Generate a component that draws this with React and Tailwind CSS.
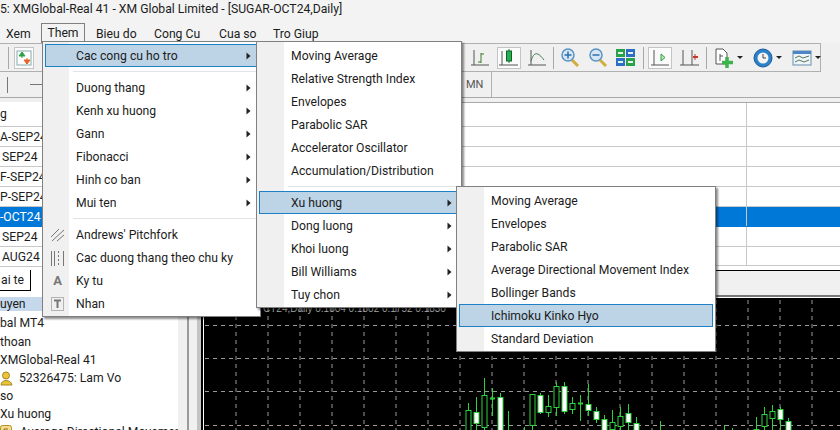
import React from 'react';

const menuOne = [
  { label: 'Cac cong cu ho tro', sub: true, active: true },
  { sep: true },
  { label: 'Duong thang', sub: true },
  { label: 'Kenh xu huong', sub: true },
  { label: 'Gann', sub: true },
  { label: 'Fibonacci', sub: true },
  { label: 'Hinh co ban', sub: true },
  { label: 'Mui ten', sub: true },
  { sep: true },
  { label: "Andrews' Pitchfork", icon: 'fork' },
  { label: 'Cac duong thang theo chu ky', icon: 'cycle' },
  { label: 'Ky tu', icon: 'a' },
  { label: 'Nhan', icon: 't' },
];

const menuTwo = [
  { label: 'Moving Average' },
  { label: 'Relative Strength Index' },
  { label: 'Envelopes' },
  { label: 'Parabolic SAR' },
  { label: 'Accelerator Oscillator' },
  { label: 'Accumulation/Distribution' },
  { sep: true },
  { label: 'Xu huong', sub: true, active: true },
  { label: 'Dong luong', sub: true },
  { label: 'Khoi luong', sub: true },
  { label: 'Bill Williams', sub: true },
  { label: 'Tuy chon', sub: true },
];

const menuThree = [
  { label: 'Moving Average' },
  { label: 'Envelopes' },
  { label: 'Parabolic SAR' },
  { label: 'Average Directional Movement Index' },
  { label: 'Bollinger Bands' },
  { label: 'Ichimoku Kinko Hyo', active: true },
  { label: 'Standard Deviation' },
];

const symbols = [
  { text: 'g' },
  { text: 'A-SEP24' },
  { text: 'SEP24', pad: true },
  { text: 'F-SEP24' },
  { text: 'P-SEP24' },
  { text: '-OCT24', active: true },
  { text: 'SEP24', pad: true },
  { text: 'AUG24', pad: true },
];

// x, wick top, wick bottom, body top, body bottom, filled
const candles = [
  [468, 403, 431, 410, 431, false],
  [476, 397, 431, 412, 423, true],
  [484, 378, 431, 395, 427, false],
  [492, 388, 416, 398, 398, false],
  [500, 393, 431, 397, 431, true],
  [508, 411, 431],
  [524, 427, 431],
  [532, 394, 431, 394, 425, false],
  [540, 393, 414, 395, 412, true],
  [548, 395, 417, 406, 412, false],
  [556, 382, 416, 386, 407, false],
  [564, 382, 414, 386, 411, true],
  [572, 397, 414, 403, 409, false],
  [580, 395, 421, 403, 403, false],
  [588, 384, 416, 404, 410, true],
  [596, 407, 423, 411, 419, true],
  [604, 415, 431, 419, 431, true],
  [612, 410, 431, 422, 429, false],
  [620, 407, 431, 416, 426, false],
  [628, 404, 431, 413, 422, true],
  [636, 417, 431, 423, 431, true],
  [660, 421, 431],
  [724, 425, 431],
  [732, 428, 431],
  [756, 417, 431, 429, 431, false],
  [764, 407, 431, 414, 426, false],
  [772, 405, 431, 411, 418, false],
  [780, 407, 431, 409, 419, true],
  [788, 418, 431, 421, 431, true],
];

function Arrow() {
  return (
    <svg width="5" height="8" viewBox="0 0 5 8" className="shrink-0">
      <path d="M0.5 0.5 L4.5 4 L0.5 7.5 Z" fill="#222" />
    </svg>
  );
}

function GutterIcon({ name }) {
  if (name === 'a') {
    return <span className="text-[13px] font-bold text-[#777]">A</span>;
  }
  return (
    <svg width="15" height="16" viewBox="0 0 15 16" fill="none" stroke="#777">
      {name === 'fork' && <path d="M1 10 L9 2 M2 14 L14 3 M7 14 L14 8" />}
      {name === 'cycle' && <path d="M1.5 1 V16 M4.5 1 V16 M8.5 1 V3 M8.5 5 V7 M8.5 9 V11 M8.5 13 V15 M13.5 1 V16" />}
      {name === 't' && (
        <>
          <rect x="1.5" y="1.5" width="12" height="13" strokeDasharray="1 1" />
          <path d="M4 4.5 H11 M7.5 4.5 V12" strokeWidth="2" />
        </>
      )}
    </svg>
  );
}

function Menu({ items, className, gutter, textPad }) {
  return (
    <div className={`absolute z-10 border border-[#808080] bg-white pt-[2px] pb-[1px] shadow-[2px_2px_2px_rgba(0,0,0,0.45)] ${className}`}>
      <div className={`absolute top-0 bottom-0 left-0 bg-[#f0f0f0] ${gutter}`} />
      {items.map((item, i) =>
        item.sep ? (
          <div key={i} className={`relative flex h-[9px] items-center pr-1 ${textPad}`}>
            <div className="h-px w-full bg-[#e4e4e4]" />
          </div>
        ) : (
          <div
            key={i}
            className={`relative mx-[2px] flex h-[23px] items-center justify-between border pr-[6px] ${textPad} ${
              item.active ? 'border-[#1f7fc4] bg-[#bdd3e6]' : 'border-transparent'
            }`}
          >
            {item.icon && (
              <span className="absolute left-[4px] top-0 flex h-full w-[15px] items-center justify-center">
                <GutterIcon name={item.icon} />
              </span>
            )}
            <span className="whitespace-nowrap pt-[2px]">{item.label}</span>
            {item.sub && <Arrow />}
          </div>
        )
      )}
    </div>
  );
}

function ToolIcon({ name }) {
  return (
    <svg width="22" height="22" viewBox="0 0 22 22" fill="none">
      {name === 'bar' && (
        <>
          <path d="M5 3 V18 M2 18 H20" stroke="#555" />
          <path d="M12 6 V16 M9 15 H12 M12 7 H15" stroke="#3d7a2e" />
        </>
      )}
      {name === 'candle' && (
        <>
          <path d="M4 4 V18 M1 18 H20" stroke="#555" />
          <path d="M11 2 V16" stroke="#1f7a2e" />
          <rect x="8.5" y="4" width="5" height="10" fill="#22b14c" stroke="#14602a" />
        </>
      )}
      {name === 'line' && (
        <>
          <path d="M5 3 V18 M2 18 H20" stroke="#555" />
          <path d="M5 14 C8 4 12 5 18 13" stroke="#3d7a4e" />
        </>
      )}
      {(name === 'zoomin' || name === 'zoomout') && (
        <>
          <path d="M13 13 L19 19" stroke="#d2ad3c" strokeWidth="3" />
          <circle cx="9" cy="8" r="6" fill="#d6e6f5" stroke="#5a93c2" strokeWidth="1.5" />
          <path d={name === 'zoomin' ? 'M5.5 8 H12.5 M9 4.5 V11.5' : 'M5.5 8 H12.5'} stroke="#2f6fa8" strokeWidth="1.5" />
        </>
      )}
      {name === 'grid' && (
        <>
          <rect x="1" y="2" width="9" height="8" fill="#2aa24a" />
          <rect x="11" y="2" width="9" height="8" fill="#2d6fc4" />
          <rect x="1" y="11" width="9" height="8" fill="#2d6fc4" />
          <rect x="11" y="11" width="9" height="8" fill="#2aa24a" />
          <path d="M3 6 H8 M13 6 H18 M3 15 H8 M13 15 H18" stroke="#e8f2ea" strokeWidth="2" />
        </>
      )}
      {name === 'shift' && (
        <>
          <path d="M5 3 V18 M2 18 H20" stroke="#555" />
          <path d="M12 7 L16 10.5 L12 14 Z" fill="#b8e8b8" stroke="#2f9e44" />
        </>
      )}
      {name === 'auto' && (
        <>
          <path d="M4 3 V18 M1 18 H20 M13 3 V18" stroke="#555" />
          <path d="M14 10 H19" stroke="#c0392b" strokeWidth="2" />
          <path d="M16 7 V13" stroke="#c0392b" />
        </>
      )}
      {name === 'new' && (
        <>
          <path d="M3 2 H10 L14 6 V17 H3 Z" fill="#fff" stroke="#555" />
          <path d="M7 7 V14 M7 9 H10" stroke="#555" />
          <path d="M14 10 V21 M9 15.5 H20" stroke="#3cb44b" strokeWidth="3.5" />
        </>
      )}
      {name === 'clock' && (
        <>
          <circle cx="11" cy="11" r="9" fill="#2c7fc9" stroke="#1b5d9a" />
          <circle cx="11" cy="11" r="5.5" fill="#f4f4f4" />
          <path d="M11 7 V11 H14" stroke="#444" />
        </>
      )}
      {name === 'template' && (
        <>
          <rect x="2" y="4" width="18" height="14" fill="#eef4fa" stroke="#6a8cae" />
          <rect x="2" y="4" width="18" height="3" fill="#4d86c4" />
          <path d="M4 11 L8 9 L12 11 L18 9 M4 15 L8 13 L13 15 L18 13" stroke="#557a55" />
        </>
      )}
    </svg>
  );
}

function Tool({ name, active, caret, className = '' }) {
  return (
    <div className={`flex h-[22px] shrink-0 items-center ${className}`}>
      <div className={`flex h-[22px] w-[24px] items-center justify-center border ${active ? 'border-[#c4c4c4] bg-[#fbfbfb]' : 'border-transparent'}`}>
        <ToolIcon name={name} />
      </div>
      {caret && <span className="ml-[1px] h-0 w-0 border-x-[3px] border-t-[3px] border-x-transparent border-t-[#222]" />}
    </div>
  );
}

function Divider({ className = '' }) {
  return <div className={`h-[22px] w-px shrink-0 bg-[#a8a8a8] ${className}`} />;
}

function Chart() {
  const vertical = [];
  for (let x = 236; x < 840; x += 32) vertical.push(x);
  return (
    <svg viewBox="204 298 636 132" className="block h-[132px] w-[636px]">
      {vertical.map(x => (
        <path key={x} d={`M${x} 300 V431`} stroke="#999" strokeDasharray="4 4" />
      ))}
      {[325, 358, 391, 425].map(y => (
        <path key={y} d={`M205 ${y + 0.5} H840`} stroke="#999" strokeDasharray="4 4" />
      ))}
      <text x="263" y="312" fill="#aaa" fontSize="10" fontFamily="'Liberation Sans', sans-serif">CT24,Daily  0.1804 0.1802 0.1752 0.1830</text>
      {candles.map(([x, top, bottom, bodyTop, bodyBottom, filled]) => (
        <g key={x}>
          <path d={`M${x + 0.5} ${top} V${bottom}`} stroke="#2fd13c" />
          {bodyTop !== undefined && bodyTop === bodyBottom && <path d={`M${x - 2} ${bodyTop + 0.5} H${x + 3}`} stroke="#2fd13c" strokeWidth="2" />}
          {bodyTop !== undefined && bodyTop !== bodyBottom && (
            <rect x={x - 2} y={bodyTop + 0.5} width="5" height={bodyBottom - bodyTop} fill={filled ? '#fff' : '#000'} stroke="#2fd13c" />
          )}
        </g>
      ))}
    </svg>
  );
}

function Person() {
  return (
    <svg width="13" height="15" viewBox="0 0 13 15" className="shrink-0">
      <circle cx="6" cy="4.5" r="3.5" fill="#e8c53a" stroke="#a8851c" />
      <path d="M1 14 C1 8 11 8 12 14 Z" fill="#e8c53a" stroke="#a8851c" />
    </svg>
  );
}

function Doc() {
  return (
    <svg width="12" height="14" viewBox="0 0 12 14" className="shrink-0">
      <rect x="0.5" y="0.5" width="11" height="13" rx="2" fill="#f3dc8a" stroke="#b0902a" />
      <path d="M4 4 H8 M4 4 V10 M4 7 H7" stroke="#8a6d14" />
    </svg>
  );
}

export default function App() {
  return (
    <div className="relative h-[430px] w-[840px] overflow-hidden bg-[#f0f0f0] font-['Roboto','Noto_Sans',sans-serif] text-[12.2px] leading-none text-[#1c1c1c]">
      {/* title bar */}
      <div className="flex h-[18px] items-center whitespace-nowrap bg-[#f3f3f3]">5: XMGlobal-Real 41 - XM Global Limited - [SUGAR-OCT24,Daily]</div>

      {/* menu bar */}
      <div className="flex h-[25px] items-end whitespace-nowrap bg-[#f3f3f3] pl-[6px]">
        <div className="flex h-[18px] w-[23px] items-center">Xem</div>
        <div className="ml-[12px] flex h-[20px] w-[44px] items-center justify-center border border-b-0 border-[#808080]">Them</div>
        <div className="ml-[11px] flex h-[18px] w-[40px] items-center">Bieu do</div>
        <div className="ml-[18px] flex h-[18px] w-[47px] items-center">Cong Cu</div>
        <div className="ml-[18px] flex h-[18px] w-[36px] items-center">Cua so</div>
        <div className="ml-[18px] flex h-[18px] items-center">Tro Giup</div>
      </div>

      {/* main toolbar */}
      <div className="flex h-[29px] w-[821px] items-center border-y border-r border-[#b0b0b0]">
        <div className="flex w-[468px] shrink-0 items-center">
          <Divider className="ml-[8px]" />
          <div className="ml-[5px] h-[22px] w-[20px] shrink-0 border border-[#c4c4c4] bg-[#fbfbfb]">
            <svg width="18" height="20" viewBox="0 0 18 20">
              <rect x="2" y="3" width="14" height="14" fill="#fff" stroke="#8aa" />
              <path d="M7 4 L10 8 H4 Z M7 8 V10" fill="#2aa24a" stroke="#2aa24a" />
              <path d="M12 16 L15 12 H9 Z M12 10 V12" fill="#e0672a" stroke="#e0672a" />
            </svg>
          </div>
        </div>
        <Tool name="bar" />
        <Tool name="candle" active className="ml-[5px]" />
        <Tool name="line" className="ml-[4px]" />
        <Divider className="ml-[4px]" />
        <Tool name="zoomin" className="ml-[4px]" />
        <Tool name="zoomout" className="ml-[4px]" />
        <Tool name="grid" className="ml-[4px]" />
        <Divider className="ml-[5px]" />
        <Tool name="shift" active className="ml-[4px]" />
        <Tool name="auto" className="ml-[6px]" />
        <Divider className="ml-[4px]" />
        <Tool name="new" caret className="ml-[5px]" />
        <Tool name="clock" caret className="ml-[8px]" />
        <Tool name="template" caret className="ml-[8px]" />
      </div>

      {/* timeframe toolbar */}
      <div className="flex h-[26px] items-center border-b border-[#a8a8a8]">
        <div className="ml-[7px] h-[16px] w-px bg-[#777]" />
        <div className="ml-[22px] h-px w-[14px] bg-[#777]" />
        <div className="ml-auto flex h-full w-[374px] items-center">
          <span className="text-[11px] text-[#555]">MN</span>
          <div className="ml-[8px] h-full w-px bg-[#b0b0b0]" />
        </div>
      </div>

      <div className="flex h-[332px]">
        {/* left column */}
        <div className="flex w-[203px] shrink-0 flex-col overflow-hidden">
          <div className="mt-[4px] h-[168px] shrink-0 bg-white">
            {symbols.map((s, i) => (
              <div
                key={i}
                className={`flex items-center border-b pt-px ${i === 0 ? 'h-[25px]' : 'h-[20px]'} ${s.pad ? 'pl-[2px]' : ''} ${
                  s.active ? 'border-[#0078d7] bg-[#0078d7] text-white' : 'border-[#c8c8c8]'
                }`}
              >
                {s.text}
              </div>
            ))}
          </div>
          <div className="flex h-[27px] shrink-0 items-start bg-white">
            <div className="flex h-[21px] w-[31px] items-center border-r border-b border-black pl-[1px]">ai te</div>
          </div>
          <div className="flex min-h-0 flex-1 bg-white">
            <div className="min-w-0 flex-1 whitespace-nowrap">
              <div className="flex h-[14px] items-center bg-[#c5d8ec]">uyen</div>
              <div className="flex h-[22px] items-end pb-[4px]">bal MT4</div>
              <div className="flex h-[18px] items-center">thoan</div>
              <div className="flex h-[18px] items-center">XMGlobal-Real 41</div>
              <div className="flex h-[18px] items-center gap-[6px]"><Person />52326475: Lam Vo</div>
              <div className="flex h-[18px] items-center">so</div>
              <div className="flex h-[18px] items-center">Xu huong</div>
              <div className="flex h-[18px] items-center gap-[8px]"><Doc />Average Directional Movemen</div>
            </div>
            <div className="flex w-[19px] shrink-0 justify-center bg-[#f0f0f0] pt-[20px]">
              <div className="h-full w-[2px] bg-[#9a9a9a]" />
            </div>
            <div className="w-[6px] shrink-0 border-r-2 border-black bg-[#c4c4c4]" />
          </div>
        </div>

        {/* right column */}
        <div className="min-w-0 flex-1">
          <div className="mt-[4px] h-[168px] border-t border-[#a8a8a8] bg-white">
            {[24, 20, 20, 20, 20, 20, 20, 19].map((h, i) => (
              <div
                key={i}
                style={{ height: h }}
                className={`flex justify-end border-b ${i === 5 ? 'border-[#0078d7] bg-[#0078d7]' : 'border-[#c8c8c8]'}`}
              >
                <div className="mr-[93px] w-px bg-[#c8c8c8]" />
              </div>
            ))}
          </div>
          <div className="flex h-[28px] flex-col border-t border-black bg-[#f0f0f0]">
            <div className="flex-1" />
            <div className="h-[2px] bg-[#777]" />
            <div className="h-px bg-white" />
          </div>
          <div className="h-[132px] border-l border-white bg-black">
            <Chart />
          </div>
        </div>
      </div>

      <Menu items={menuOne} className="left-[42px] top-[41px] w-[219px]" gutter="w-[26px]" textPad="pl-[30px]" />
      <Menu items={menuTwo} className="left-[256px] top-[41px] w-[206px]" gutter="w-[27px]" textPad="pl-[31px]" />
      <Menu items={menuThree} className="left-[456px] top-[186px] w-[260px]" gutter="w-[27px]" textPad="pl-[31px]" />
    </div>
  );
}
